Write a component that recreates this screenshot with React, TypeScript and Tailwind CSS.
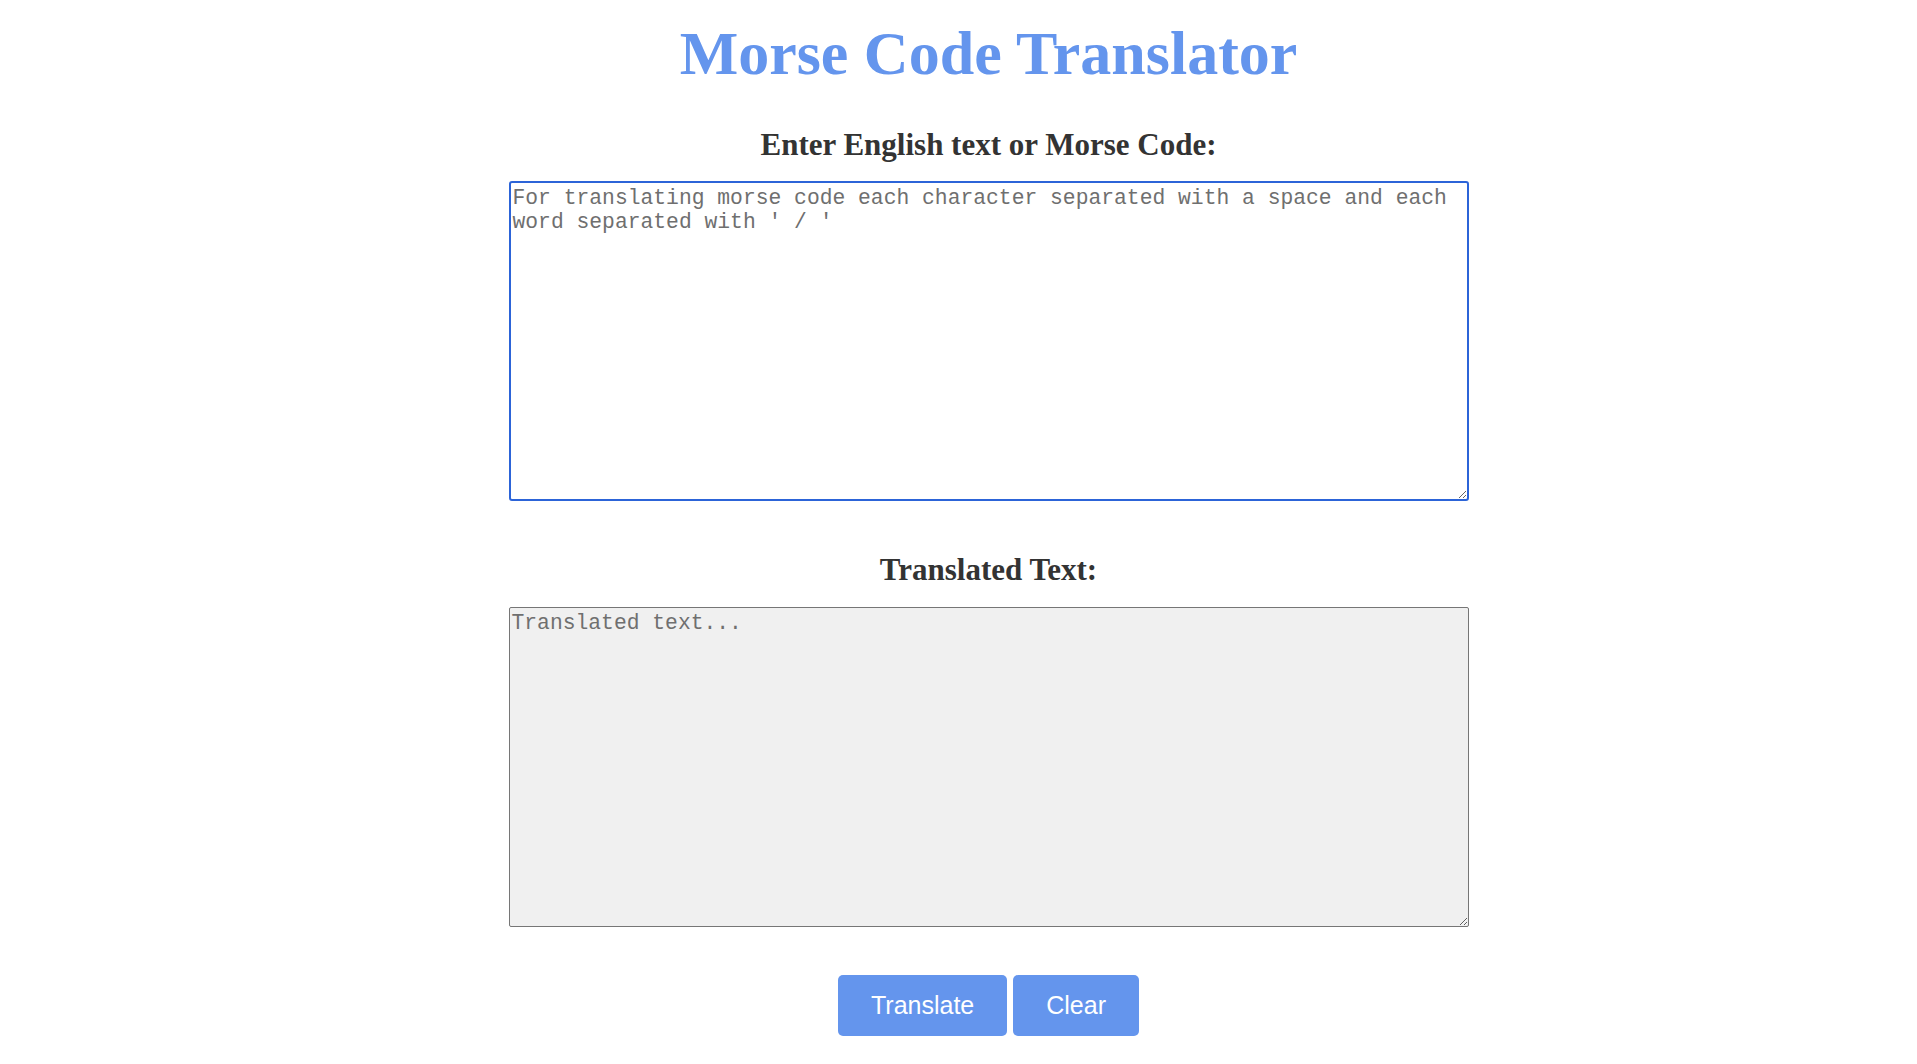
import React, { useState } from 'react';

const MORSE: Record<string, string> = {
  a: '.-', b: '-...', c: '-.-.', d: '-..', e: '.', f: '..-.', g: '--.', h: '....', i: '..', j: '.---',
  k: '-.-', l: '.-..', m: '--', n: '-.', o: '---', p: '.--.', q: '--.-', r: '.-.', s: '...', t: '-',
  u: '..-', v: '...-', w: '.--', x: '-..-', y: '-.--', z: '--..',
  '0': '-----', '1': '.----', '2': '..---', '3': '...--', '4': '....-', '5': '.....',
  '6': '-....', '7': '--...', '8': '---..', '9': '----.',
};

const translate = (input: string) => {
  const text = input.trim();
  if (!text) return '';
  if (/^[.\-\s/]+$/.test(text)) {
    const reverse = Object.fromEntries(Object.entries(MORSE).map(([k, v]) => [v, k]));
    return text
      .split(' / ')
      .map((word) => word.split(' ').map((c) => reverse[c] ?? '').join(''))
      .join(' ')
      .toUpperCase();
  }
  return text
    .toLowerCase()
    .split(' ')
    .map((word) => word.split('').map((c) => MORSE[c] ?? '').join(' '))
    .join(' / ');
};

const App: React.FC = () => {
  const [input, setInput] = useState('');
  const [output, setOutput] = useState('');

  const headingFont = { fontFamily: '"Liberation Serif", "Times New Roman", serif' };

  return (
    <div className="min-h-screen bg-white flex flex-col items-center pl-[60px]">
      <h1
        style={headingFont}
        className="mt-[22px] text-[62px] leading-[62px] font-bold text-[#6495ed]"
      >
        Morse Code Translator
      </h1>

      <h2 style={headingFont} className="mt-[45px] text-[31px] leading-[31px] font-bold text-[#333333]">
        Enter English text or Morse Code:
      </h2>
      <textarea
        value={input}
        onChange={(e) => setInput(e.target.value)}
        placeholder="For translating morse code each character separated with a space and each word separated with ' / '"
        className="mt-[21px] w-[960px] h-[320px] px-[2px] pt-[3px] pb-[2px] bg-white border-2 border-[#2c64d8] rounded-[3px] outline-none text-[21.33px] leading-[1.133] text-[#333] placeholder:text-[#6f6f6f] font-['Liberation_Mono',_'Courier_New',_monospace]"
      />

      <h2 style={headingFont} className="mt-[53px] text-[31px] leading-[31px] font-bold text-[#333333]">
        Translated Text:
      </h2>
      <textarea
        readOnly
        value={output}
        placeholder="Translated text..."
        className="mt-[22px] w-[960px] h-[320px] px-[2px] pt-[3px] pb-[2px] bg-[#f0f0f0] border border-[#767676] rounded-[2px] outline-none text-[21.33px] leading-[1.133] text-[#333] placeholder:text-[#6f6f6f] font-['Liberation_Mono',_'Courier_New',_monospace]"
      />

      <div className="mt-[48px] flex gap-[6px] font-['Liberation_Sans',_Arial,_sans-serif]">
        <button
          onClick={() => setOutput(translate(input))}
          className="h-[61px] px-[33px] bg-[#6495ed] text-white text-[25px] rounded-[5px]"
        >
          Translate
        </button>
        <button
          onClick={() => {
            setInput('');
            setOutput('');
          }}
          className="h-[61px] px-[33px] bg-[#6495ed] text-white text-[25px] rounded-[5px]"
        >
          Clear
        </button>
      </div>
    </div>
  );
};

export default App;
